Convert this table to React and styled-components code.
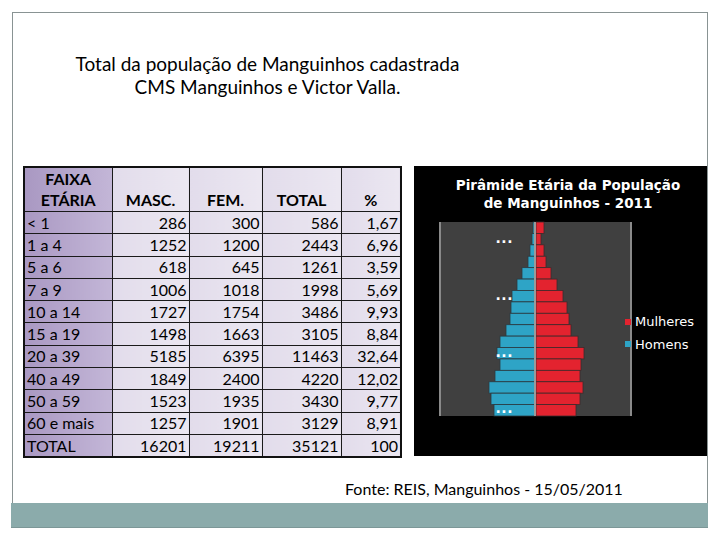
import React from "react";
import styled, { createGlobalStyle } from "styled-components";

const GlobalStyle = createGlobalStyle`
  body {
    margin: 0;
    background: #fff;
  }
`;

const rows = [
  ["< 1", 286, 300, 586, "1,67"],
  ["1 a 4", 1252, 1200, 2443, "6,96"],
  ["5 a 6", 618, 645, 1261, "3,59"],
  ["7 a 9", 1006, 1018, 1998, "5,69"],
  ["10 a 14", 1727, 1754, 3486, "9,93"],
  ["15 a 19", 1498, 1663, 3105, "8,84"],
  ["20 a 39", 5185, 6395, 11463, "32,64"],
  ["40 a 49", 1849, 2400, 4220, "12,02"],
  ["50 a 59", 1523, 1935, 3430, "9,77"],
  ["60 e mais", 1257, 1901, 3129, "8,91"],
  ["TOTAL", 16201, 19211, 35121, "100"],
];

// left edge of the blue bar, right edge of the red bar (px from plot left)
const bars = [
  [94, 105], [93, 102], [91, 105], [89, 107], [83, 112], [78, 118],
  [73, 124], [72, 128], [71, 130], [67, 132], [61, 139], [58, 145],
  [61, 142], [56, 141], [50, 144], [52, 141], [55, 137],
];

const Slide = styled.div`
  margin: 12px 0 0 12px;
  width: 696px;
  display: flex;
  flex-direction: column;
  font-family: Lato, "Open Sans", sans-serif;
  color: #000;
`;

const Frame = styled.div`
  height: 491px;
  box-sizing: border-box;
  border: 1px solid #899393;
  border-bottom: none;
  padding-top: 39px;
  display: flex;
  flex-direction: column;
`;

const Title = styled.h1`
  margin: 0 0 0 61px;
  width: 387px;
  font-size: 19px;
  line-height: 23px;
  font-weight: 400;
  text-align: center;
  white-space: nowrap;
`;

const Content = styled.div`
  display: flex;
  align-items: flex-start;
  gap: 12px;
  margin-top: 68px;
  padding-left: 10px;
`;

const Table = styled.table`
  border-collapse: collapse;
  border: 2px solid #111;
  table-layout: fixed;
  width: 377px;
  font-size: 16px;
`;

const cellBg = (label) =>
  label
    ? "linear-gradient(to right, #a998c2, #c3b6d7)"
    : "linear-gradient(to right, #e2dceb, #ebe7f1)";

const Cell = styled.td`
  border: 1px solid #1a1a1a;
  height: 21.3px;
  padding: 0 2px;
  line-height: 20px;
  text-align: ${(p) => (p.$label ? "left" : "right")};
  background: ${(p) => cellBg(p.$label)};
  white-space: nowrap;
`;

const Head = styled.th`
  border: 1px solid #1a1a1a;
  height: 42px;
  padding: 0 0 1px;
  font-weight: 700;
  line-height: 21px;
  vertical-align: bottom;
  text-align: center;
  background: ${(p) => cellBg(p.$label)};
`;

const Chart = styled.div`
  width: 293px;
  height: 290px;
  background: #000;
  display: flex;
  flex-direction: column;
`;

const ChartTitle = styled.div`
  padding: 10px 0 0 15px;
  color: #fff;
  font-family: "DejaVu Sans", Verdana, sans-serif;
  font-weight: 700;
  font-size: 13.5px;
  line-height: 18px;
  text-align: center;
  white-space: nowrap;
`;

const Plot = styled.svg`
  display: block;
  margin: 10px 0 0 25px;
  overflow: visible;
`;

const Source = styled.p`
  margin: 21px 0 0 332px;
  font-size: 16px;
  line-height: 20px;
`;

const FooterBar = styled.div`
  height: 25px;
  margin-left: -1px;
  width: 697px;
  background: #8babab;
  border-bottom: 1px solid #7c9797;
  box-sizing: border-box;
`;

const PyramidPlot = () => {
  const h = 194 / bars.length;
  const axis = 96;
  return (
    <Plot width="268" height="194" viewBox="0 0 268 194">
      <rect x="0" y="0" width="193" height="194" fill="#404040" />
      {bars.map(([l, r], i) => (
        <g key={i}>
          <rect x={l} y={i * h} width={axis - l} height={h} fill="#2ea4c6" stroke="#2b3a40" strokeWidth="0.8" />
          <rect x={axis + 1} y={i * h} width={r - axis - 1} height={h} fill="#e3232f" stroke="#402a2b" strokeWidth="0.8" />
        </g>
      ))}
      <line x1={axis} y1="0" x2={axis} y2="194" stroke="#9a9a9a" strokeWidth="2" />
      <line x1="1" y1="0" x2="1" y2="194" stroke="#8a8a8a" strokeWidth="2" />
      <line x1="192" y1="0" x2="192" y2="194" stroke="#8a8a8a" strokeWidth="2" />
      {[21, 78, 135, 191].map((y) => (
        <text key={y} x="74" y={y} fill="#fff" fontSize="14" fontWeight="700" textAnchor="end" fontFamily="DejaVu Sans, sans-serif" letterSpacing="0.5">
          ...
        </text>
      ))}
      <rect x="186" y="97" width="6" height="6" fill="#e3232f" />
      <text x="196" y="104" fill="#fff" fontSize="13" fontFamily="DejaVu Sans, sans-serif">Mulheres</text>
      <rect x="186" y="119" width="6" height="6" fill="#2ea4c6" />
      <text x="196" y="127" fill="#fff" fontSize="13" fontFamily="DejaVu Sans, sans-serif">Homens</text>
    </Plot>
  );
};

export default function App() {
  return (
    <>
      <GlobalStyle />
      <Slide>
        <Frame>
          <Title>
            Total da população de Manguinhos cadastrada
            <br />
            CMS Manguinhos e Victor Valla.
          </Title>
          <Content>
            <Table>
              <colgroup>
                <col style={{ width: 88 }} />
                <col style={{ width: 77 }} />
                <col style={{ width: 73 }} />
                <col style={{ width: 79 }} />
                <col style={{ width: 60 }} />
              </colgroup>
              <thead>
                <tr>
                  <Head $label>
                    FAIXA
                    <br />
                    ETÁRIA
                  </Head>
                  <Head>MASC.</Head>
                  <Head>FEM.</Head>
                  <Head>TOTAL</Head>
                  <Head>%</Head>
                </tr>
              </thead>
              <tbody>
                {rows.map(([label, m, f, t, p]) => (
                  <tr key={label}>
                    <Cell $label>{label}</Cell>
                    <Cell>{m}</Cell>
                    <Cell>{f}</Cell>
                    <Cell>{t}</Cell>
                    <Cell>{p}</Cell>
                  </tr>
                ))}
              </tbody>
            </Table>
            <Chart>
              <ChartTitle>
                Pirâmide Etária da População
                <br />
                de Manguinhos - 2011
              </ChartTitle>
              <PyramidPlot />
            </Chart>
          </Content>
          <Source>Fonte: REIS, Manguinhos - 15/05/2011</Source>
        </Frame>
        <FooterBar />
      </Slide>
    </>
  );
}
